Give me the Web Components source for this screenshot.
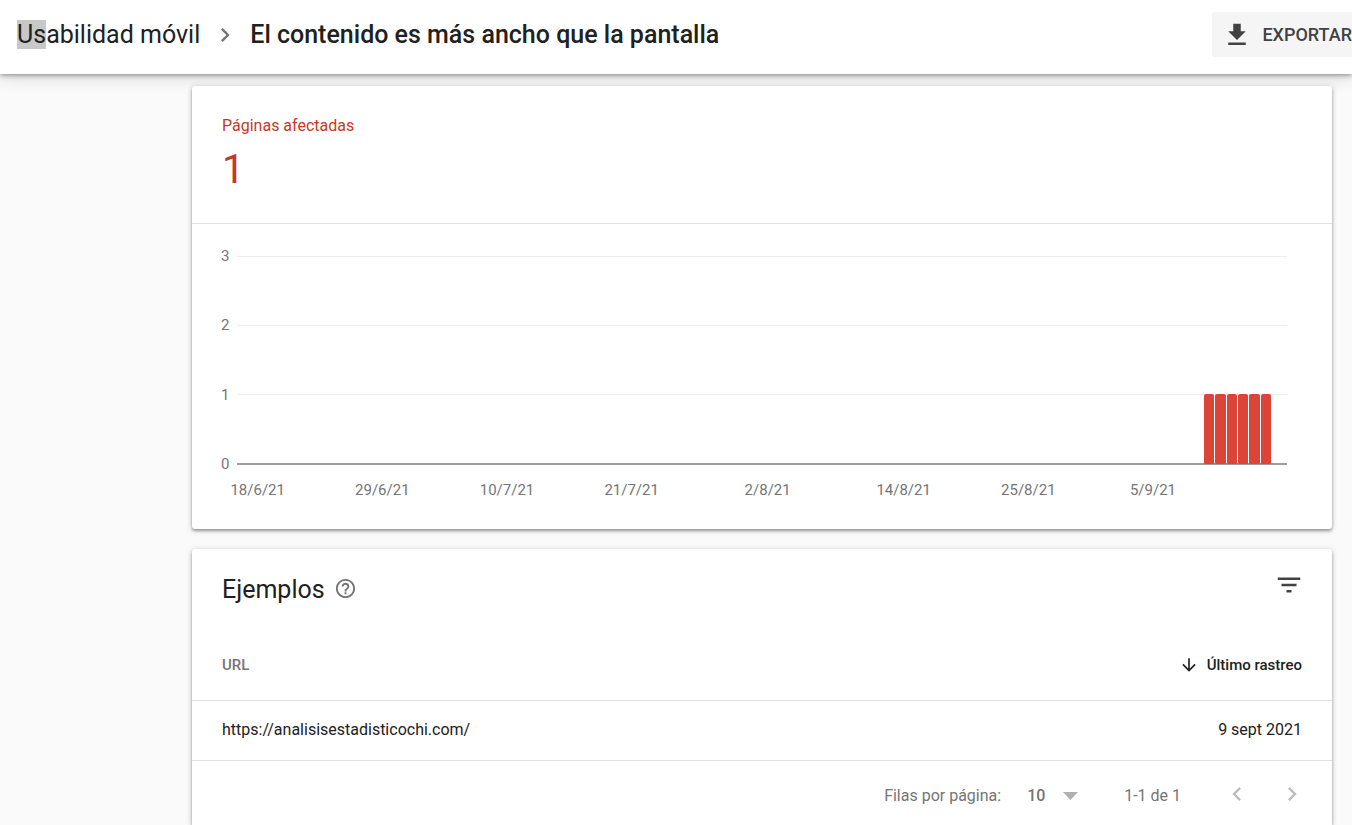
<!DOCTYPE html>
<html lang="es">
<head>
<meta charset="utf-8">
<meta name="viewport" content="width=device-width, initial-scale=1">
<title>Usabilidad móvil</title>
<style>
  html, body { margin: 0; height: 100%; }
  body { background: #fafafa; color: #212121; font: 16px/24px Roboto, "Liberation Sans", sans-serif; }
</style>
</head>
<body>
<report-page>
  <report-header slot="header" section="Usabilidad móvil" selected="2">El contenido es más ancho que la pantalla</report-header>
  <report-card>
    <affected-pages count="1">Páginas afectadas</affected-pages>
    <bar-chart></bar-chart>
  </report-card>
  <report-card class="last">
    <examples-table></examples-table>
    <table-pager></table-pager>
  </report-card>
</report-page>

<script>
const ICONS = {
  download: 'M19 9h-4V3H9v6H5l7 7 7-7zM5 18v2h14v-2H5z',
  right: 'M10 6L8.59 7.41 13.17 12l-4.58 4.59L10 18l6-6z',
  left: 'M15.41 7.41L14 6l-6 6 6 6 1.41-1.41L10.83 12z',
  filter: 'M10 18h4v-2h-4v2zM3 6v2h18V6H3zm3 7h12v-2H6v2z',
  down: 'M20 12l-1.41-1.41L13 16.17V4h-2v12.17l-5.58-5.59L4 12l8 8 8-8z',
  help: 'M11 18h2v-2h-2v2zm1-16C6.48 2 2 6.48 2 12s4.48 10 10 10 10-4.48 10-10S17.52 2 12 2zm0 18c-4.41 0-8-3.59-8-8s3.59-8 8-8 8 3.59 8 8-3.59 8-8 8zm0-14c-2.21 0-4 1.79-4 4h2c0-1.1.9-2 2-2s2 .9 2 2c0 2-3 1.75-3 5h2c0-2.25 3-2.5 3-5 0-2.21-1.79-4-4-4z'
};

function define(name, render) {
  customElements.define(name, class extends HTMLElement {
    connectedCallback() {
      if (!this.shadowRoot) this.attachShadow({ mode: 'open' }).innerHTML = render(this);
    }
  });
}

const RESET = `
  *, *::before, *::after { box-sizing: border-box; }
  button, select { margin: 0; padding: 0; border: 0; background: none; font: inherit; color: inherit; }
  a { color: inherit; text-decoration: none; }
`;

define('ui-icon', el => `
  <style>
    :host { display: block; flex: none; width: var(--size, 24px); height: var(--size, 24px); }
    svg { display: block; width: 100%; height: 100%; fill: currentColor; }
  </style>
  <svg viewBox="0 0 24 24" aria-hidden="true"><path d="${ICONS[el.getAttribute('name')]}"/></svg>`);

define('report-page', () => `
  <style>${RESET}
    :host { display: flex; flex-direction: column; min-height: 100vh; overflow: hidden; }
    main { flex: 1; display: flex; flex-direction: column; gap: 20px; padding: 12px 20px 0 192px; }
  </style>
  <slot name="header"></slot>
  <main><slot></slot></main>`);

define('report-header', el => {
  const s = el.getAttribute('section'), n = +el.getAttribute('selected');
  return `
  <style>${RESET}
    :host { display: block; background: #fff; box-shadow: 0 1px 5px rgba(0,0,0,.42), 0 4px 16px rgba(0,0,0,.14); }
    header { display: flex; align-items: center; justify-content: space-between; height: 74px; padding: 0 0 5px 17px; }
    nav { display: flex; align-items: center; font-size: 25px; line-height: 30px; white-space: nowrap; }
    .sel { background: #c8c8c8; }
    ui-icon { --size: 28px; color: #757575; margin: 0 11px; }
    h1 { margin: 0; font-size: 25px; line-height: 30px; font-weight: 500; }
    button { display: flex; align-items: center; gap: 10px; height: 45px; padding-left: 10px; background: #f5f5f5;
      border-radius: 3px 0 0 3px; color: #424242; font-size: 18px; font-weight: 500; }
    button ui-icon { --size: 30px; color: #424242; margin: 0; }
  </style>
  <header>
    <nav><a href="#"><span class="sel">${s.slice(0, n)}</span>${s.slice(n)}</a><ui-icon name="right"></ui-icon><h1><slot></slot></h1></nav>
    <button type="button"><ui-icon name="download"></ui-icon>EXPORTAR</button>
  </header>`;
});

define('report-card', () => `
  <style>
    :host { display: block; background: #fff; border-radius: 3px; box-shadow: 0 2px 3px rgba(0,0,0,.32), 0 1px 6px rgba(0,0,0,.18); }
    :host(.last) { flex: 1; border-radius: 3px 3px 0 0; }
  </style>
  <slot></slot>`);

define('affected-pages', el => `
  <style>
    :host { display: flex; flex-direction: column; gap: 8px; padding: 28px 30px 29px; border-bottom: 1px solid #e0e0e0; color: #c53929; }
    .count { font-size: 40px; line-height: 48px; }
  </style>
  <div><slot></slot></div>
  <div class="count">${el.getAttribute('count')}</div>`);

define('bar-chart', () => {
  const max = 3;
  const ticks = [['18/6/21', 0], ['29/6/21', 11], ['10/7/21', 22], ['21/7/21', 33], ['2/8/21', 45], ['14/8/21', 57], ['25/8/21', 68], ['5/9/21', 79]];
  const bars = [84, 85, 86, 87, 88, 89].map(day => [day, 1]);
  return `
  <style>${RESET}
    :host { display: grid; grid-template-columns: 16px 1fr; padding: 23px 45px 30px 29px; color: #757575; font-size: 15px; line-height: 18px; }
    .y { display: flex; flex-direction: column; justify-content: space-between; height: 226px; }
    .plot { display: grid; margin: 9px 0 8px; }
    .plot > div { grid-area: 1 / 1; }
    .lines { display: flex; flex-direction: column; justify-content: space-between; }
    .lines i { height: 1px; background: #eee; }
    .lines i:last-child { height: 2px; background: #9e9e9e; }
    .days { display: grid; grid-template-columns: repeat(90, minmax(0, 1fr)); padding: 0 15px; }
    .plot > .bars { align-items: end; padding: 0 16px 1px 14px; column-gap: 1px; }
    .bars b { height: calc(100% * var(--v) / ${max} + 1px); background: #db4437; border-radius: 2px 2px 0 0; }
    .x { grid-column: 2; margin-top: 8px; }
    .x span { display: flex; justify-content: center; white-space: nowrap; }
  </style>
  <div class="y"><span>3</span><span>2</span><span>1</span><span>0</span></div>
  <div class="plot">
    <div class="lines"><i></i><i></i><i></i><i></i></div>
    <div class="days bars">${bars.map(([d, v]) => `<b style="grid-column:${d + 1};grid-row:1;--v:${v}"></b>`).join('')}</div>
  </div>
  <div class="days x">${ticks.map(([t, d]) => `<span style="grid-column:${d + 1};grid-row:1">${t}</span>`).join('')}</div>`;
});

define('examples-table', () => `
  <style>${RESET}
    :host { display: block; }
    .head { display: flex; align-items: flex-start; padding: 21px 28px 19px 30px; }
    h2 { margin: 0; font-size: 25px; line-height: 40px; font-weight: 400; }
    .help { margin: 7px auto 7px 9px; color: #757575; }
    .help ui-icon { --size: 23px; }
    .filter { --size: 30px; color: #424242; }
    table { width: 100%; border-collapse: separate; border-spacing: 0; }
    th, td { padding: 0 30px; text-align: left; border-bottom: 1px solid #e0e0e0; }
    th { height: 72px; font-size: 15px; font-weight: 500; color: #757575; }
    td { height: 60px; padding-bottom: 2px; }
    th:last-child, td:last-child { text-align: right; }
    th button { display: inline-flex; align-items: center; gap: 8px; color: #212121; vertical-align: middle; }
    th ui-icon { --size: 20px; }
  </style>
  <div class="head">
    <h2>Ejemplos</h2>
    <button class="help" type="button" aria-label="Ayuda"><ui-icon name="help"></ui-icon></button>
    <button class="filter" type="button" aria-label="Filtrar"><ui-icon name="filter"></ui-icon></button>
  </div>
  <table>
    <thead><tr><th scope="col">URL</th><th scope="col"><button type="button"><ui-icon name="down"></ui-icon>Último rastreo</button></th></tr></thead>
    <tbody><tr><td><a href="https://analisisestadisticochi.com/">https://analisisestadisticochi.com/</a></td><td>9 sept 2021</td></tr></tbody>
  </table>`);

define('table-pager', () => `
  <style>${RESET}
    :host { display: flex; align-items: flex-start; justify-content: flex-end; padding: 19px 26px 0 30px; color: #757575; line-height: 32px; }
    .pick { display: flex; align-items: center; margin: 0 46px 0 26px; }
    select { appearance: none; width: 36px; height: 32px; font-weight: 500; }
    .pick svg { display: block; width: 15px; height: 8px; fill: #b0b0b0; }
    button { --size: 28px; margin-left: 27px; color: #bdbdbd; }
    .range { margin-right: 15px; }
  </style>
  <label for="rows">Filas por página:</label>
  <span class="pick"><select id="rows"><option>10</option><option>25</option><option>50</option></select><svg viewBox="0 0 30 16" aria-hidden="true"><path d="M0 0h30L15 16z"/></svg></span>
  <span class="range">1-1 de 1</span>
  <button type="button" aria-label="Página anterior"><ui-icon name="left"></ui-icon></button>
  <button type="button" aria-label="Página siguiente"><ui-icon name="right"></ui-icon></button>`);
</script>
</body>
</html>
